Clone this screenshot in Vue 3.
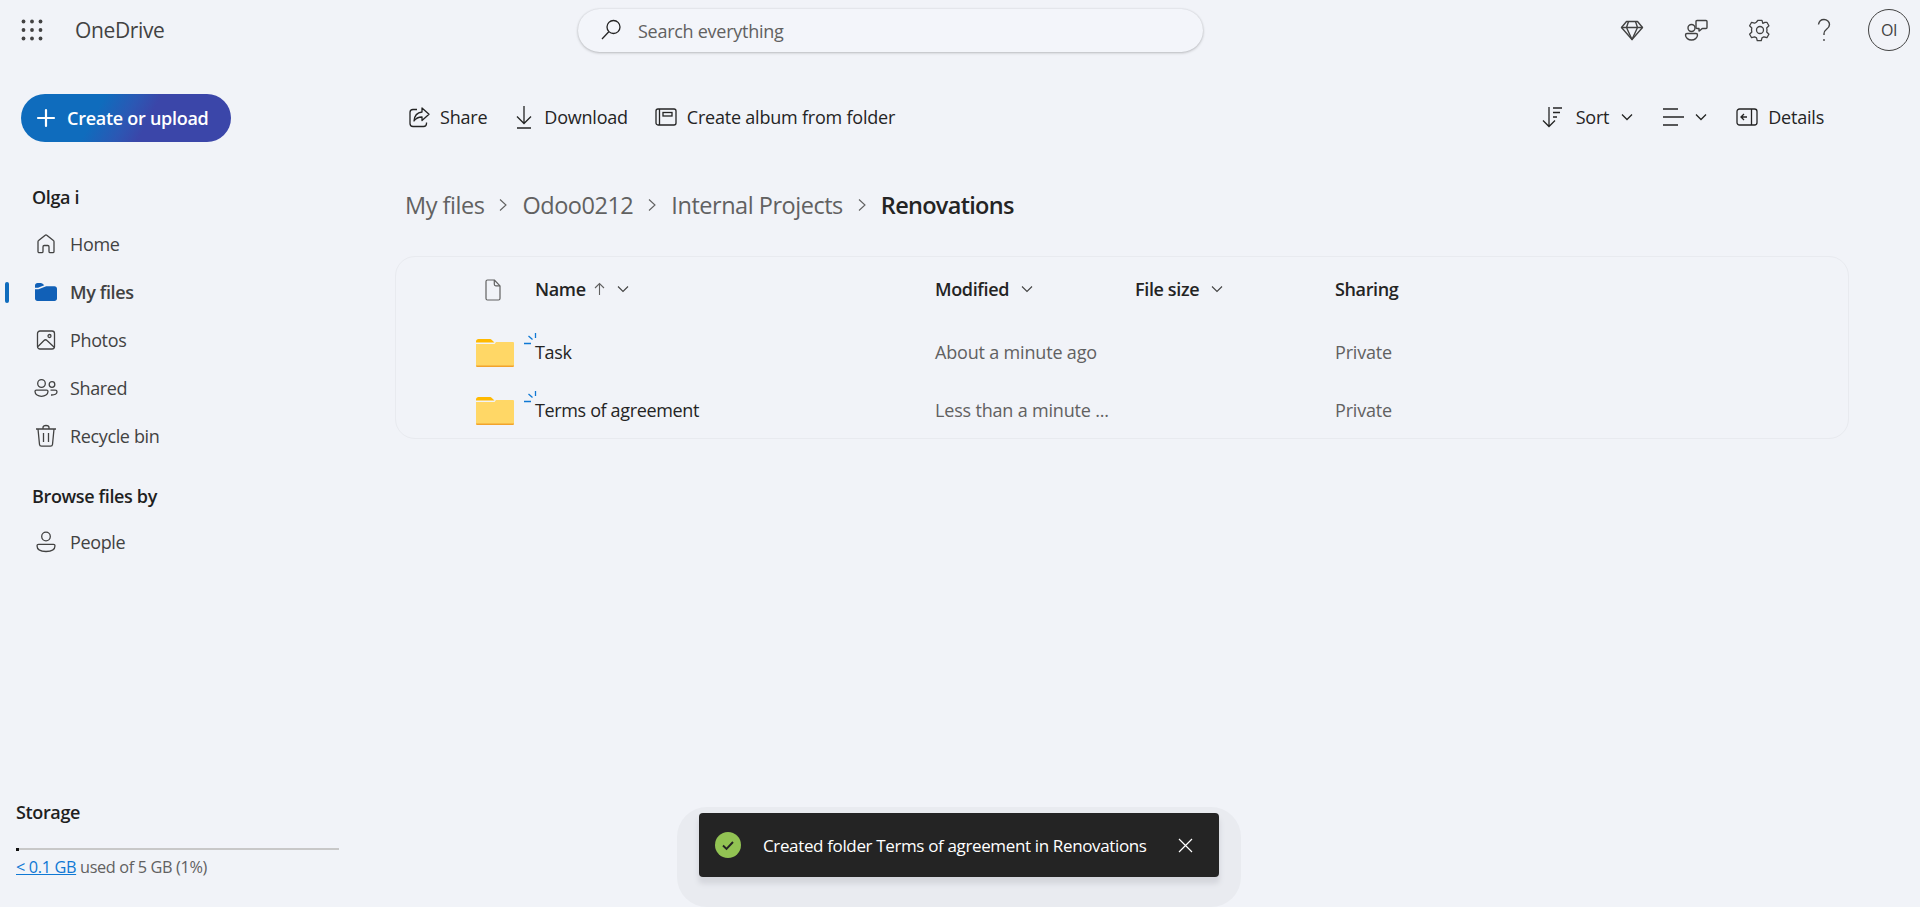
<script setup>
const rows = [
  { name: 'Task', modified: 'About a minute ago', sharing: 'Private' },
  { name: 'Terms of agreement', modified: 'Less than a minute ...', sharing: 'Private' }
]
</script>

<template>
  <div class="page">
    <header class="top">
      <div class="brand">
        <svg class="waffle" width="22" height="22" viewBox="0 0 22 22" fill="#424242">
          <circle cx="2.500" cy="2.500" r="1.900"/><circle cx="11" cy="2.500" r="1.900"/><circle cx="19.500" cy="2.500" r="1.900"/>
          <circle cx="2.500" cy="11" r="1.900"/><circle cx="11" cy="11" r="1.900"/><circle cx="19.500" cy="11" r="1.900"/>
          <circle cx="2.500" cy="19.500" r="1.900"/><circle cx="11" cy="19.500" r="1.900"/><circle cx="19.500" cy="19.500" r="1.900"/>
        </svg>
        <span class="logo">OneDrive</span>
      </div>
      <div class="search">
        <svg width="24" height="24" viewBox="0 0 24 24" fill="none" stroke="#242424" stroke-width="1.300">
          <circle cx="14.500" cy="9" r="6.500"/><path d="M9.800 13.700 3 21"/>
        </svg>
        <span>Search everything</span>
      </div>
      <div class="actions">
        <svg class="act" width="24" height="24" viewBox="0 0 24 24" fill="none" stroke="#424242" stroke-width="1.400" stroke-linejoin="round">
          <path d="M6.500 3.500h11L22.500 9.500 12 21.500 1.500 9.500Z"/><path d="M1.500 9.500h21M8.500 3.500l-2 6L12 21.500l5.500-12-2-6"/>
        </svg>
        <svg class="act" width="24" height="24" viewBox="0 0 24 24" fill="none" stroke="#424242" stroke-width="1.400" stroke-linejoin="round">
          <circle cx="7.500" cy="10" r="3.500"/>
          <path d="M1.500 17c0-.8.600-1.500 1.500-1.500h9c.9 0 1.500.7 1.500 1.500 0 3-3 5-6 5s-6-2-6-5Z"/>
          <path d="M13 2.500h9c.6 0 1 .4 1 1v6c0 .6-.4 1-1 1h-3.500c-.5 0-2.500 2-3.500 2.500v-2.500h-2c-.6 0-1-.4-1-1v-6c0-.6.400-1 1-1Z"/>
        </svg>
        <svg class="act" width="24" height="24" viewBox="0 0 24 24" fill="none" stroke="#424242" stroke-width="1.300" stroke-linejoin="round">
          <circle cx="12" cy="12" r="3.500"/>
          <path d="M10 2.300h4l.8 3 2-.9 2.100-.1 2 3.500-2.200 2.200.3 2-.3 2 2.200 2.200-2 3.500-3-.9-1.900 1.100-.8 2.800h-3.900l-.8-2.800-1.900-1.100-3 .9-2-3.500 2.200-2.200-.3-2 .3-2-2.200-2.200 2-3.500 3 .9 1.700-1Z"/>
        </svg>
        <svg class="act" width="24" height="24" viewBox="0 0 24 24" fill="none" stroke="#424242" stroke-width="1.400">
          <path d="M6.500 6.500C7 3.500 9.300 1.500 12 1.500c3 0 5.500 2.200 5.500 5 0 2-1 3.200-2.700 4.500-1.700 1.300-2.800 2.500-2.800 4.800v1.200"/>
          <circle cx="12" cy="22" r=".9" fill="#424242" stroke="none"/>
        </svg>
        <div class="avatar">OI</div>
      </div>
    </header>

    <div class="body">
      <aside class="side">
        <button class="create">
          <svg width="20" height="20" viewBox="0 0 20 20" stroke="#fff" stroke-width="2.200" stroke-linecap="round"><path d="M10 2v16M2 10h16"/></svg>
          <span>Create or upload</span>
        </button>
        <div class="label">Olga i</div>
        <nav>
          <a class="item">
            <svg width="22" height="22" viewBox="0 0 22 22" fill="none" stroke="#424242" stroke-width="1.300">
              <path d="M3 18.500V8.800c0-.5.200-.9.600-1.200L9.900 2.400a1.700 1.700 0 0 1 2.200 0l6.300 5.200c.4.300.6.700.6 1.200v9.700c0 .7-.5 1.200-1.200 1.200h-2.600c-.7 0-1.200-.5-1.200-1.200v-4.800c0-.7-.5-1.200-1.200-1.200H9.200c-.7 0-1.200.5-1.200 1.200v4.800c0 .7-.5 1.200-1.200 1.200H4.200c-.7 0-1.200-.5-1.200-1.200Z"/>
            </svg>
            Home
          </a>
          <a class="item active">
            <svg width="22" height="22" viewBox="0 0 22 22" fill="#1160b7">
              <path d="M0 4.500C0 3.100 1.100 2 2.500 2h3.200c.6 0 1.200.2 1.600.6L9.300 4.300 3 6.800H0Z"/>
              <path d="M0 8.300h3.500l7.700-3H19.500c1.400 0 2.500 1.100 2.500 2.500v9.700c0 1.400-1.100 2.500-2.500 2.500h-17C1.100 20 0 18.900 0 17.500Z"/>
            </svg>
            My files
          </a>
          <a class="item">
            <svg width="22" height="22" viewBox="0 0 22 22" fill="none" stroke="#424242" stroke-width="1.300">
              <rect x="2.500" y="2" width="17" height="18" rx="2.500"/>
              <circle cx="14.500" cy="7" r="1.500"/>
              <path d="M3 17.500 9 11.500c1-1 2-1 3 0l7.500 7"/>
            </svg>
            Photos
          </a>
          <a class="item">
            <svg class="wide" width="24" height="22" viewBox="0 0 24 22" fill="none" stroke="#424242" stroke-width="1.300">
              <circle cx="7.500" cy="6.500" r="3.800"/>
              <circle cx="18" cy="7.500" r="2.800"/>
              <path d="M1 14.500c0-.7.600-1.300 1.300-1.300h10.400c.7 0 1.300.6 1.300 1.300 0 3-3.200 4.800-6.500 4.800S1 17.500 1 14.500Z"/>
              <path d="M16.500 13.200h4.700c.8 0 1.800.5 1.800 1.500 0 2.300-2.200 3.500-6 3.300"/>
            </svg>
            Shared
          </a>
          <a class="item">
            <svg width="22" height="24" viewBox="0 0 22 24" fill="none" stroke="#424242" stroke-width="1.300">
              <path d="M1 5h20M8 5V3.500C8 2.400 9 1.500 11 1.500s3 .9 3 2V5M3 5l1.500 15.500c.1 1 .9 1.700 2 1.700h9c1.100 0 1.900-.7 2-1.700L19 5M8.500 9v9M13.500 9v9"/>
            </svg>
            Recycle bin
          </a>
        </nav>
        <div class="label browse">Browse files by</div>
        <a class="item">
          <svg width="22" height="22" viewBox="0 0 22 22" fill="none" stroke="#424242" stroke-width="1.300">
            <circle cx="11" cy="5.500" r="4.300"/>
            <path d="M2 14.800c0-.8.700-1.500 1.500-1.500h15c.8 0 1.500.7 1.500 1.500 0 3.500-3.500 5.700-9 5.700s-9-2.200-9-5.700Z"/>
          </svg>
          People
        </a>
        <div class="storage">
          <div class="st-title">Storage</div>
          <div class="bar"><div class="fill"></div></div>
          <div class="st-text"><span class="link">&lt; 0.1 GB</span> used of 5 GB (1%)</div>
        </div>
      </aside>

      <main class="main">
        <div class="toolbar">
          <div class="tool">
            <svg width="22" height="22" viewBox="0 0 22 22" fill="none" stroke="#242424" stroke-width="1.300" stroke-linejoin="round">
              <path d="M9 3.500H5A3 3 0 0 0 2 6.500v11a3 3 0 0 0 3 3h10.500a3 3 0 0 0 3-3v-1"/>
              <path d="M14 2l7 6.300-7 6.200v-3.500c-3.500 0-6 1-8 4 .4-5 3-8.500 8-9Z"/>
            </svg>
            Share
          </div>
          <div class="tool">
            <svg width="20" height="24" viewBox="0 0 20 24" fill="none" stroke="#242424" stroke-width="1.300">
              <path d="M10 1v17M3 11.500l7 7 7-7M3 23h14"/>
            </svg>
            Download
          </div>
          <div class="tool">
            <svg width="22" height="22" viewBox="0 0 22 22" fill="none" stroke="#242424" stroke-width="1.300">
              <rect x="1" y="3" width="20" height="16" rx="2"/>
              <path d="M4.500 3v16"/>
              <rect x="8" y="6.500" width="9" height="3.500"/>
            </svg>
            Create album from folder
          </div>
          <div class="tool-right">
            <div class="tool sort">
              <svg width="22" height="24" viewBox="0 0 22 24" fill="none" stroke="#242424" stroke-width="1.300">
                <path d="M7 2v19M1 15.500 7 21.500l6-6M11 3h9M11 7.500h7M11 12h4"/>
              </svg>
              Sort
              <svg class="chev" width="12" height="8" viewBox="0 0 12 8" fill="none" stroke="#242424" stroke-width="1.300"><path d="M1 1.500l5 5 5-5"/></svg>
            </div>
            <div class="tool list">
              <svg width="22" height="20" viewBox="0 0 22 20" fill="none" stroke="#242424" stroke-width="1.300">
                <path d="M1 2h15M1 10h21M1 18h15"/>
              </svg>
              <svg class="chev" width="12" height="8" viewBox="0 0 12 8" fill="none" stroke="#242424" stroke-width="1.300"><path d="M1 1.500l5 5 5-5"/></svg>
            </div>
            <div class="tool">
              <svg width="22" height="18" viewBox="0 0 22 18" fill="none" stroke="#242424" stroke-width="1.300">
                <rect x="1" y="1" width="20" height="16" rx="2.500"/>
                <path d="M15.500 1v16M11 9H5M8 6 5 9l3 3"/>
              </svg>
              Details
            </div>
          </div>
        </div>

        <div class="crumbs">
          <span>My files</span>
          <svg width="10" height="14" viewBox="0 0 10 14" fill="none" stroke="#616161" stroke-width="1.100"><path d="M2 1.500 8 7l-6 5.500"/></svg>
          <span>Odoo0212</span>
          <svg width="10" height="14" viewBox="0 0 10 14" fill="none" stroke="#616161" stroke-width="1.100"><path d="M2 1.500 8 7l-6 5.500"/></svg>
          <span>Internal Projects</span>
          <svg width="10" height="14" viewBox="0 0 10 14" fill="none" stroke="#616161" stroke-width="1.100"><path d="M2 1.500 8 7l-6 5.500"/></svg>
          <strong>Renovations</strong>
        </div>

        <section class="card">
          <div class="row head">
            <div class="ic">
              <svg width="16" height="22" viewBox="0 0 16 22" fill="none" stroke="#616161" stroke-width="1.200" stroke-linejoin="round">
                <path d="M2.500 1h6.800L15 6.800V19.500c0 .8-.7 1.500-1.500 1.500h-11C1.700 21 1 20.300 1 19.500v-17C1 1.700 1.700 1 2.500 1Z"/>
                <path d="M9.300 1v4.300c0 .8.700 1.500 1.500 1.500H15"/>
              </svg>
            </div>
            <div class="th">
              Name
              <svg class="up" width="11" height="14" viewBox="0 0 11 14" fill="none" stroke="#616161" stroke-width="1.100"><path d="M5.500 13V1.500M1 6l4.500-4.500L10 6"/></svg>
              <svg class="down" width="12" height="8" viewBox="0 0 12 8" fill="none" stroke="#424242" stroke-width="1.100"><path d="M1 1.500l5 5 5-5"/></svg>
            </div>
            <div class="th">
              Modified
              <svg class="down" width="12" height="8" viewBox="0 0 12 8" fill="none" stroke="#424242" stroke-width="1.100"><path d="M1 1.500l5 5 5-5"/></svg>
            </div>
            <div class="th">
              File size
              <svg class="down" width="12" height="8" viewBox="0 0 12 8" fill="none" stroke="#424242" stroke-width="1.100"><path d="M1 1.500l5 5 5-5"/></svg>
            </div>
            <div class="th">Sharing</div>
          </div>
          <div v-for="r in rows" :key="r.name" class="row file">
            <div class="ic">
              <svg width="38" height="28" viewBox="0 0 38 28">
                <path d="M0 2.500C0 1.100 1.100 0 2.500 0h11c1 0 2 .4 2.600 1.200L18.500 3.500H0Z" fill="#ffb900"/>
                <path d="M0 5h18.500l1.500-2h17a1 1 0 0 1 1 1v22.500a1.500 1.500 0 0 1-1.500 1.500h-35A1.500 1.500 0 0 1 0 26.500Z" fill="#ffd766"/>
                <path d="M0 26.600h38v.2c0 .7-.5 1.200-1.200 1.200H1.200C.5 28 0 27.500 0 26.800Z" fill="#f2a32c"/>
              </svg>
            </div>
            <div class="name">
              <svg class="spark" width="14" height="13" viewBox="0 0 14 13" fill="none" stroke="#0f78d4" stroke-width="1.300">
                <path d="M11.500 0v5M4.500 3l4 3.500M0 10.500h7"/>
              </svg>
              {{ r.name }}
            </div>
            <div class="muted">{{ r.modified }}</div>
            <div class="muted"></div>
            <div class="muted">{{ r.sharing }}</div>
          </div>
        </section>
      </main>
    </div>

    <div class="halo">
      <div class="toast">
        <svg class="ok" width="26" height="26" viewBox="0 0 26 26">
          <circle cx="13" cy="13" r="13" fill="#92c353"/>
          <path d="M8 13.500l3.500 3.500L18 10" fill="none" stroke="#242424" stroke-width="1.900"/>
        </svg>
        <span class="msg">Created folder Terms of agreement in Renovations</span>
        <svg class="close" width="15" height="15" viewBox="0 0 15 15" stroke="#fff" stroke-width="1.200"><path d="M1 1l13 13M14 1 1 14"/></svg>
      </div>
    </div>
  </div>
</template>

<style>
html, body { margin: 0; background: #f1f3f8; }
</style>

<style scoped>
.page {
  position: relative;
  height: 907px;
  overflow: hidden;
  display: flex;
  flex-direction: column;
  background: #f1f3f8;
  color: #242424;
  font-family: "Open Sans", "Noto Sans", sans-serif;
  font-size: 18px;
  letter-spacing: -0.02em;
}
.top { height: 60px; flex: none; display: flex; align-items: center; }
.brand { width: 578px; flex: none; display: flex; align-items: center; padding-left: 21px; box-sizing: border-box; }
.logo { margin-left: 32px; font-size: 21px; font-weight: 500; color: #424242; }
.search {
  width: 625px; height: 43px; box-sizing: border-box;
  display: flex; align-items: center; gap: 15px; padding-left: 21px;
  border-radius: 22px; background: #f3f5fa; color: #616161;
  box-shadow: 0 1px 3px rgba(0,0,0,.22), 0 0 2px rgba(0,0,0,.1);
}
.search span { padding-top: 2px; letter-spacing: -0.015em; }
.actions { margin-left: auto; display: flex; align-items: center; gap: 40px; padding-right: 10px; }
.avatar {
  width: 42px; height: 42px; box-sizing: border-box; margin-left: -8px;
  border: 1.500px solid #424242; border-radius: 50%;
  display: flex; align-items: center; justify-content: center;
  font-size: 16px; color: #424242;
}
.body { flex: 1; display: flex; min-height: 0; }
.side { width: 395px; flex: none; display: flex; flex-direction: column; box-sizing: border-box; padding-bottom: 29px; }
.create {
  align-self: flex-start; margin: 34px 0 34px 21px; width: 210px; height: 48px;
  display: flex; align-items: center; gap: 11px; padding: 0 0 0 15px; box-sizing: border-box;
  border: 0; border-radius: 24px; color: #fff;
  font: 600 18px "Open Sans", sans-serif; letter-spacing: -0.015em;
  background: linear-gradient(118deg, #0f6cbd 36%, #2b58b4 50%, #3b46a9 60%);
}
.label { height: 44px; line-height: 42px; padding-left: 32px; font-weight: 600; color: #1f1f1f; }
.browse { margin-top: 14px; line-height: 44px; }
nav { display: flex; flex-direction: column; }
.item {
  position: relative; height: 48px; display: flex; align-items: center; gap: 13px;
  padding-left: 35px; color: #424242;
}
.item svg { flex: none; }
.item svg.wide { margin: 0 -1px; }
.item.active { font-weight: 600; }
.item.active::before {
  content: ""; position: absolute; left: 5px; top: 14px; width: 4px; height: 21px;
  border-radius: 2px; background: #0f6cbd;
}
.storage { margin-top: auto; padding: 0 56px 0 16px; }
.st-title { font-weight: 600; color: #1f1f1f; line-height: 22px; }
.bar { margin-top: 26px; height: 2px; background: #c8c8c8; }
.fill { width: 3px; height: 3px; background: #111; margin-top: -.5px; }
.st-text { margin-top: 6px; font-size: 16.300px; color: #616161; line-height: 22px; }
.link { color: #0f78d4; text-decoration: underline; }
.main { flex: 1; min-width: 0; padding-right: 71px; display: flex; flex-direction: column; }
.toolbar { margin-top: 33px; height: 48px; display: flex; align-items: center; gap: 27px; padding: 0 25px 0 13px; letter-spacing: -0.012em; }
.tool { display: flex; align-items: center; gap: 10px; }
.tool.sort { gap: 12px; }
.tool.list { gap: 11px; }
.tool-right { margin-left: auto; display: flex; align-items: center; gap: 29px; }
.chev { flex: none; }
.crumbs { margin-top: 40px; height: 48px; display: flex; align-items: center; gap: 14px; padding-left: 10px; font-size: 23.500px; letter-spacing: -0.02em; color: #616161; }
.crumbs strong { font-weight: 600; letter-spacing: -0.03em; color: #242424; }
.card { margin-top: 27px; border: 1.500px solid #e8eaef; border-radius: 20px; box-sizing: border-box; height: 183px; }
.row { display: grid; grid-template-columns: 139px 400px 200px 200px 1fr; align-items: center; }
.head { height: 65px; }
.file { height: 58px; }
.ic { display: flex; justify-content: flex-end; padding-right: 21px; }
.file .ic { margin-top: 3px; }
.head .ic { padding-right: 34px; }
.th { display: flex; align-items: center; gap: 8px; font-weight: 600; color: #242424; margin-top: -2px; }
.down { margin-left: 4px; }
.name { position: relative; color: #242424; padding-top: 2px; }
.spark { position: absolute; left: -11px; top: -5px; }
.muted { color: #616161; padding-top: 2px; letter-spacing: -0.01em; }
.halo {
  position: absolute; left: 677px; top: 807px; width: 564px; height: 100px;
  border-radius: 30px; background: #e9ebf0;
}
.toast {
  position: absolute; left: 22px; top: 6px; width: 520px; height: 64px; box-sizing: border-box;
  font-size: 17px;
  display: flex; align-items: center; padding: 0 26px 0 16px; border-radius: 4px;
  background: #242424; color: #fff; box-shadow: 0 6px 5px 1px #d5d7dd;
}
.msg { margin-left: 22px; }
.close { margin-left: auto; }
</style>
